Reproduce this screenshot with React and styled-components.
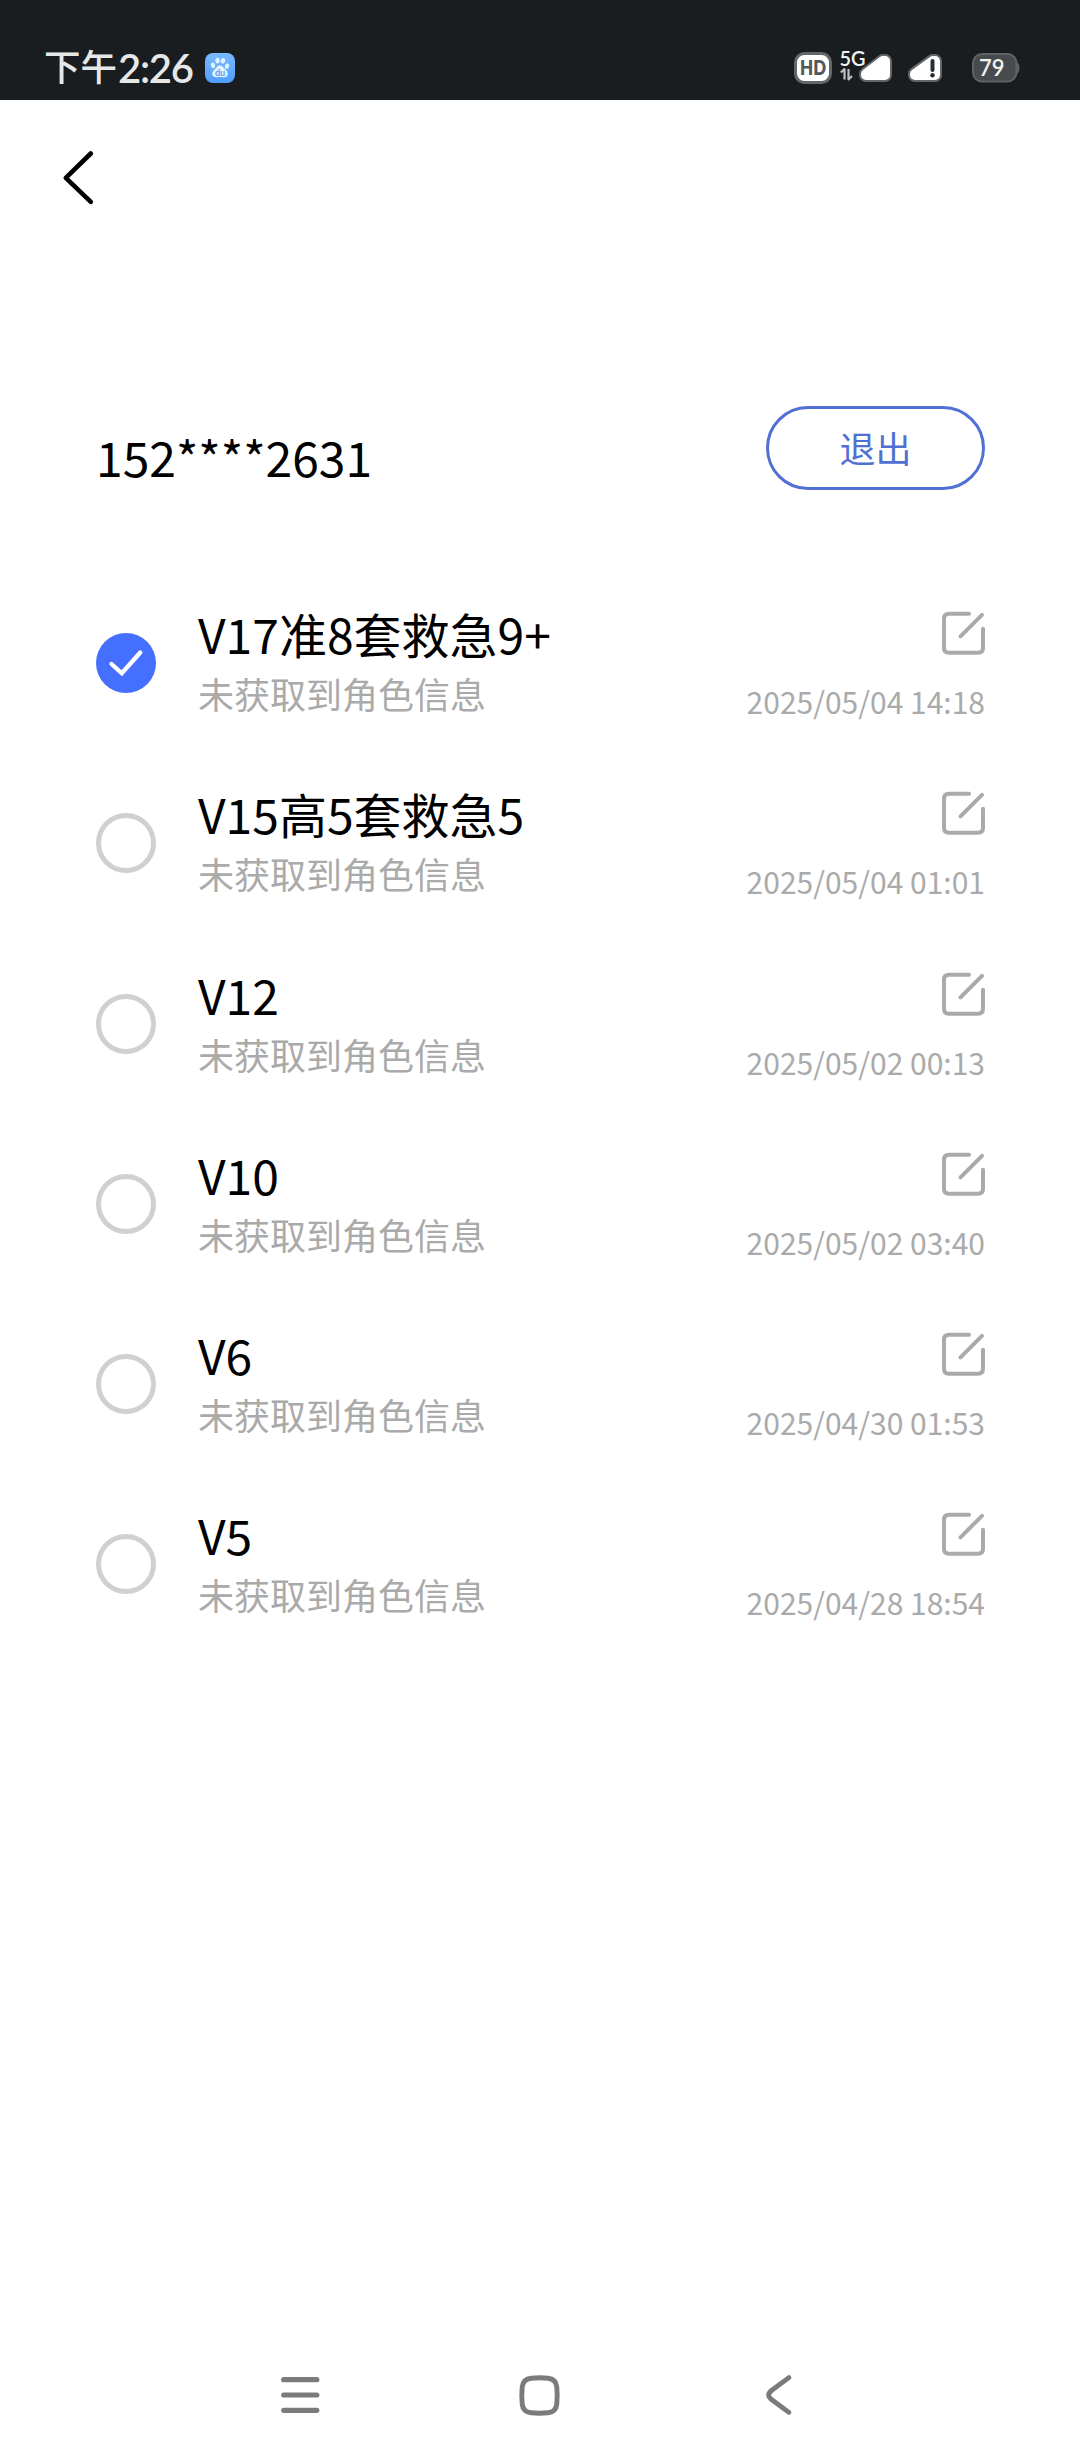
import React, { useState } from 'react';
import styled, { createGlobalStyle } from 'styled-components';

//======= STYLES =======//

const GlobalStyle = createGlobalStyle`
  body {
    margin: 0;
    background: #fff;
    font-family: "Noto Sans CJK SC", sans-serif;
  }
  * {
    box-sizing: border-box;
  }
  svg {
    display: block;
    overflow: visible;
  }
`
const Screen = styled.div`
  display: flex;
  flex-direction: column;
  width: 1080px;
  height: 2460px;
  overflow: hidden;
  background: #fff;
`
const StatusBar = styled.div`
  display: flex;
  align-items: center;
  height: 100px;
  padding: 36px 60px 0 44px;
  background: #191d20;
`
const ClockPrefix = styled.span`
  padding-bottom: 4px;
  font-size: 36.5px;
  font-weight: 500;
  line-height: 60px;
  color: #e6e8e8;
`
const ClockTime = styled.span`
  font-family: Lato, sans-serif;
  font-size: 40px;
  font-weight: 600;
  line-height: 64px;
  letter-spacing: -1.3px;
  margin: 0 12px 0 1px;
  color: #e6e8e8;
`
const StatusIcons = styled.div`
  display: flex;
  align-items: center;
  margin-left: auto;
`
const StatusIcon = styled.div`
  margin-left: ${(props) => props.$gap || 0}px;
`
const NavBar = styled.div`
  height: 238px;
  padding: 51px 0 0 63px;
`
const IconButton = styled.button`
  display: block;
  padding: 0;
  border: none;
  background: none;
  cursor: pointer;
`
const AccountRow = styled.div`
  display: flex;
  justify-content: space-between;
  padding: 68px 95px 0 96px;
  height: 235px;
`
const Phone = styled.div`
  margin-top: 14px;
  font-size: 48px;
  line-height: 72px;
  color: #000;
`
const LogoutButton = styled.button`
  width: 219px;
  height: 84px;
  padding: 0 0 2px;
  border: 3px solid #5070d4;
  border-radius: 42px;
  background: none;
  font-family: inherit;
  font-size: 36px;
  line-height: 76px;
  color: #5070d4;
  cursor: pointer;
`
const RoleList = styled.div`
  display: flex;
  flex-direction: column;
  padding-top: 0.2px;
`
const RoleRow = styled.div`
  display: flex;
  height: 180.2px;
  padding: 0 95px 0 96px;
`
const Radio = styled.div`
  display: flex;
  width: 60px;
  height: 60px;
  margin: 60px 42px 0 0;
  border: ${(props) => (props.$checked ? 'none' : '5px solid #d0d0d0')};
  border-radius: 50%;
  background: ${(props) => (props.$checked ? '#4570ff' : 'none')};
`
const RoleText = styled.div`
  flex: 1;
  white-space: nowrap;
`
const RoleName = styled.div`
  margin-top: 25px;
  font-size: 48px;
  line-height: 70px;
  color: #000;
`
const RoleHint = styled.div`
  margin-top: -1px;
  font-size: 36px;
  line-height: 52px;
  color: #aaa;
`
const RoleSide = styled.div`
  display: flex;
  flex-direction: column;
  align-items: flex-end;
  padding-top: 38px;
`
const RoleDate = styled.div`
  margin-top: 24px;
  font-size: 30px;
  line-height: 44px;
  color: #aaa;
`
const SystemNav = styled.div`
  display: grid;
  grid-template-columns: 237.5px 247.5px auto;
  align-items: center;
  height: 50px;
  margin: auto 0 40px 281px;
`

//======= ICONS =======//

const BaiduIcon = () => (
  <svg width="30" height="30" viewBox="0 0 30 30">
    <defs>
      <linearGradient id="baidu" x1="0" y1="0" x2="0" y2="1">
        <stop offset="0" stopColor="#79b9ff" />
        <stop offset="1" stopColor="#519eff" />
      </linearGradient>
    </defs>
    <rect width="30" height="30" rx="8" fill="url(#baidu)" />
    <g fill="#e3f2ff">
      <ellipse cx="12.5" cy="7.6" rx="2.2" ry="2.9" />
      <ellipse cx="18" cy="7.8" rx="2.2" ry="2.9" transform="rotate(12 18 7.8)" />
      <ellipse cx="8" cy="12.4" rx="2.1" ry="2.8" transform="rotate(-12 8 12.4)" />
      <ellipse cx="22" cy="13.2" rx="2.1" ry="2.8" transform="rotate(10 22 13.2)" />
      <path d="M15 12.2c2.6 0 3.6 2.4 5.2 4 1.7 1.5 3 3 2.5 5.2-.5 2.5-2.7 3.1-5 2.8-1.9-.3-3.5-.3-5.3 0-2.6.4-4.9-.4-5.2-3.1-.2-2.2 1.3-3.5 2.8-4.9 1.5-1.5 2.4-4 5-4z" />
    </g>
    <text x="15" y="22.5" textAnchor="middle" fontFamily="Lato, sans-serif" fontSize="9" fontWeight="700" fill="#529dee">du</text>
  </svg>
)

const HdIcon = () => (
  <svg width="38" height="32" viewBox="0 0 38 32">
    <rect x="1.5" y="1.5" width="35" height="29" rx="9" fill="#fff" stroke="#64676a" strokeWidth="3" />
    <text x="19" y="23" textAnchor="middle" fontFamily="Lato, sans-serif" fontSize="20.5" fontWeight="800" textLength="26" lengthAdjust="spacingAndGlyphs" fill="#54585b">HD</text>
  </svg>
)

const NetworkIcon = () => (
  <svg width="56" height="36" viewBox="0 0 56 36" strokeLinejoin="round">
    <path d="M28 24 45 11H47V25H28Z" fill="#64676a" stroke="#64676a" strokeWidth="14" />
    <path d="M28 24 45 11H47V25H28Z" fill="#fff" stroke="#fff" strokeWidth="10" />
    <text x="1.5" y="16.3" fontFamily="Lato, sans-serif" fontSize="20.5" fontWeight="600" textLength="26" lengthAdjust="spacingAndGlyphs" fill="#f2f2f2">5G</text>
    <path d="M6.5 29.5V19L2.8 22.5M10.5 19V29.5L14 26" fill="none" stroke="#bfc1c2" strokeWidth="2.2" />
  </svg>
)

const NoSignalIcon = () => (
  <svg width="36" height="30" viewBox="0 0 36 30" strokeLinejoin="round">
    <path d="M7 21 25 8H27V22H7Z" fill="#64676a" stroke="#64676a" strokeWidth="14" />
    <path d="M7 21 25 8H27V22H7Z" fill="#fff" stroke="#fff" strokeWidth="10" />
    <path d="M24.5 8V17" stroke="#2a2d30" strokeWidth="4" strokeLinecap="round" />
    <circle cx="24.5" cy="22.3" r="2.2" fill="#2a2d30" />
  </svg>
)

const BatteryIcon = () => (
  <svg width="48" height="30" viewBox="0 0 48 30">
    <path d="M45 9.5Q47.5 10.5 47.5 15T45 20.5Z" fill="#5d6063" />
    <rect x="1" y="1" width="43.5" height="27.5" rx="9" fill="#484b4e" stroke="#606366" strokeWidth="2" />
    <text x="7" y="22.7" fontFamily="Lato, sans-serif" fontSize="23.5" fontWeight="600" textLength="25.5" lengthAdjust="spacingAndGlyphs" fill="#f2f2f2">79</text>
  </svg>
)

const BackIcon = () => (
  <svg width="32" height="54" viewBox="0 0 32 54" fill="none" stroke="#000" strokeWidth="4.6" strokeLinecap="round" strokeLinejoin="round">
    <path d="M27.8 2.5 2.8 26.8 27.8 50.8" />
  </svg>
)

const CheckIcon = () => (
  <svg width="60" height="60" viewBox="0 0 60 60" fill="none" stroke="#fff" strokeWidth="4.3" strokeLinecap="round">
    <path d="M15.5 31 25.8 40.3 44.3 19.5" />
  </svg>
)

const EditIcon = () => (
  <svg width="43" height="44" viewBox="0 0 43 44" fill="none" stroke="#aaa" strokeWidth="4" strokeLinecap="round">
    <path d="M27 2.8H7Q2 2.8 2 7.8V36.8Q2 41.8 7 41.8H36Q41 41.8 41 36.8V17.8" />
    <path d="M18.5 25.3 40 3.8" />
  </svg>
)

const MenuIcon = () => (
  <svg width="39" height="36" viewBox="0 0 39 36" stroke="#7b7b7b" strokeWidth="5.2" strokeLinecap="round">
    <path d="M2.7 2.7H35.8M2.7 18H35.8M2.7 33.3H35.8" />
  </svg>
)

const HomeIcon = () => (
  <svg width="41" height="41" viewBox="0 0 41 41">
    <path d="M12 3.2Q20.5 2.4 29 3.2 37 4 37.8 12 38.6 20.5 37.8 29 37 37 29 37.8 20.5 38.6 12 37.8 4 37 3.2 29 2.4 20.5 3.2 12 4 4 12 3.2Z" fill="none" stroke="#7b7b7b" strokeWidth="4.9" />
  </svg>
)

const NavBackIcon = () => (
  <svg width="26" height="40" viewBox="0 0 26 40" fill="none" stroke="#7b7b7b" strokeWidth="4.9" strokeLinecap="round">
    <path d="M22.9 2.6 5.5 15.5C1.7 18.6 1.7 21.4 5.5 24.5L22.9 37.4" />
  </svg>
)

//======= DATA =======//

const roles = [
  { name: 'V17准8套救急9+', date: '2025/05/04 14:18' },
  { name: 'V15高5套救急5', date: '2025/05/04 01:01' },
  { name: 'V12', date: '2025/05/02 00:13' },
  { name: 'V10', date: '2025/05/02 03:40' },
  { name: 'V6', date: '2025/04/30 01:53' },
  { name: 'V5', date: '2025/04/28 18:54' }
]

//======= COMPONENT =======//

const App = () => {
  const [selected, setSelected] = useState(0)

  return (
    <Screen>
      <GlobalStyle />
      <StatusBar>
        <ClockPrefix>下午</ClockPrefix>
        <ClockTime>2:26</ClockTime>
        <BaiduIcon />
        <StatusIcons>
          <StatusIcon><HdIcon /></StatusIcon>
          <StatusIcon $gap={6}><NetworkIcon /></StatusIcon>
          <StatusIcon $gap={14}><NoSignalIcon /></StatusIcon>
          <StatusIcon $gap={28}><BatteryIcon /></StatusIcon>
        </StatusIcons>
      </StatusBar>
      <NavBar>
        <IconButton><BackIcon /></IconButton>
      </NavBar>
      <AccountRow>
        <Phone>152****2631</Phone>
        <LogoutButton>退出</LogoutButton>
      </AccountRow>
      <RoleList>
        {roles.map((role, idx) => (
          <RoleRow key={idx} onClick={() => setSelected(idx)}>
            <Radio $checked={idx === selected}>
              {idx === selected && <CheckIcon />}
            </Radio>
            <RoleText>
              <RoleName>{role.name}</RoleName>
              <RoleHint>未获取到角色信息</RoleHint>
            </RoleText>
            <RoleSide>
              <IconButton><EditIcon /></IconButton>
              <RoleDate>{role.date}</RoleDate>
            </RoleSide>
          </RoleRow>
        ))}
      </RoleList>
      <SystemNav>
        <MenuIcon />
        <HomeIcon />
        <NavBackIcon />
      </SystemNav>
    </Screen>
  )
}

export default App;
